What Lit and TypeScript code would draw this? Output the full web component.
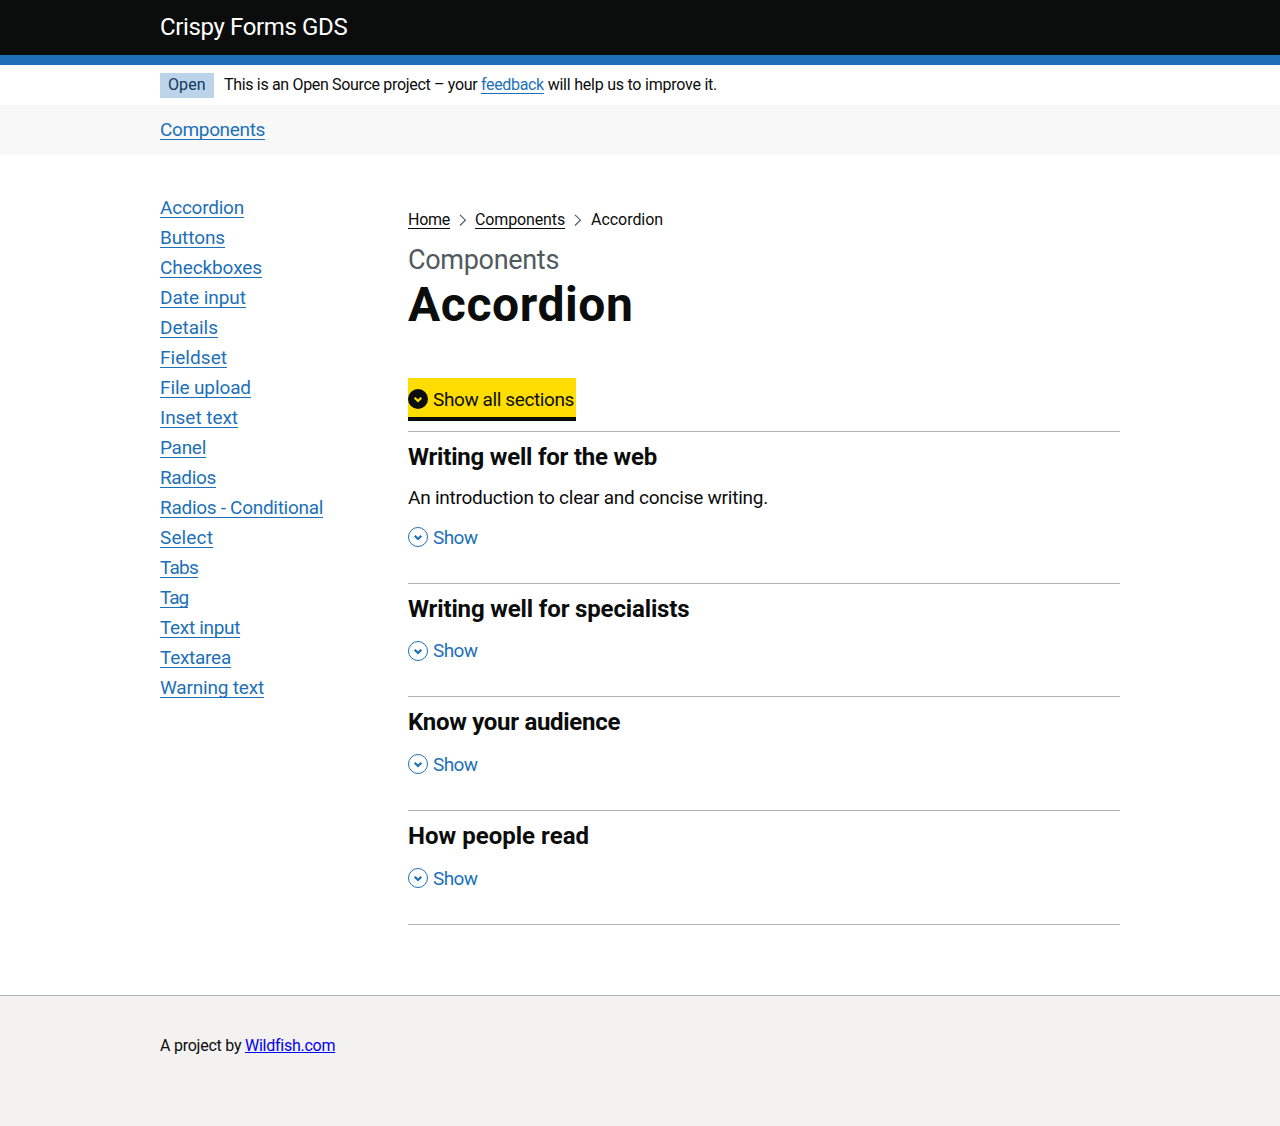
import { LitElement, html, svg, css } from "lit";
import { customElement } from "lit/decorators.js";
import { styleMap } from "lit/directives/style-map.js";

/** A label and its letter tracking in pixels. */
type Label = [text: string, tracking: number];

interface Section {
  title: Label;
  summary?: Label;
}

const NAV: Label[] = [
  ["Accordion", -0.23],
  ["Buttons", -0.1],
  ["Checkboxes", -0.09],
  ["Date input", -0.03],
  ["Details", -0.02],
  ["Fieldset", 0.05],
  ["File upload", -0.11],
  ["Inset text", -0.04],
  ["Panel", -0.28],
  ["Radios", -0.34],
  ["Radios - Conditional", -0.29],
  ["Select", 0.13],
  ["Tabs", -0.77],
  ["Tag", -1.1],
  ["Text input", -0.33],
  ["Textarea", -0.27],
  ["Warning text", -0.19],
];

const SECTIONS: Section[] = [
  {
    title: ["Writing well for the web", -0.22],
    summary: ["An introduction to clear and concise writing.", -0.24],
  },
  { title: ["Writing well for specialists", -0.15] },
  { title: ["Know your audience", -0.3] },
  { title: ["How people read", 0.02] },
];

const tracked = ([text, tracking]: Label) =>
  html`<span style=${styleMap({ letterSpacing: `${tracking}px` })}>${text}</span>`;

const link = (label: Label, cls = "link") =>
  html`<a class=${cls} href="#" style=${styleMap({ letterSpacing: `${label[1]}px` })}>${label[0]}</a>`;

const toggleIcon = (filled: boolean) => html`
  <svg class="icon" viewBox="0 0 20 20" width="20" height="20" aria-hidden="true">
    ${filled
      ? svg`<circle cx="10" cy="10" r="10" fill="#0b0c0c" />`
      : svg`<circle cx="10" cy="10" r="9.5" fill="none" stroke="#1d70b8" />`}
    <path d="M6.7 8.7 10 12l3.3-3.3" fill="none" stroke=${filled ? "#ffdd00" : "#1d70b8"} stroke-width="2.2" />
  </svg>
`;

const chevron = html`
  <svg class="chevron" viewBox="0 0 8 12" width="8" height="12" aria-hidden="true">
    <path d="M1 .9 6.4 6.2 1 11.5" fill="none" stroke="#505a5f" stroke-width="1.15" />
  </svg>
`;

@customElement("app-root")
export class AppRoot extends LitElement {
  static styles = css`
    :host {
      display: flex;
      flex-direction: column;
      min-height: 1126px;
      background: #fff;
      color: #0b0c0c;
      font: 400 19px/25px Roboto, "Liberation Sans", sans-serif;
      font-kerning: normal;
    }
    .container {
      width: 960px;
      margin: 0 auto;
    }
    .header {
      box-sizing: border-box;
      height: 65px;
      padding-top: 12px;
      border-bottom: 10px solid #1d70b8;
      background: #0b0c0c;
      color: #fff;
      font-size: 24px;
      line-height: 30px;
    }
    .phase {
      display: flex;
      align-items: flex-start;
      box-sizing: border-box;
      height: 40px;
      padding-top: 8px;
      font-size: 16px;
      line-height: 20px;
    }
    .tag {
      box-sizing: border-box;
      width: 54px;
      height: 25px;
      margin-right: 10px;
      padding: 2px 0 0 8px;
      background: #bbd4ea;
      color: #0f385c;
      font-weight: 400;
    }
    .phase-text {
      padding-top: 2px;
      white-space: pre;
    }
    .link {
      color: #1d70b8;
      text-decoration: underline 1px;
      text-underline-offset: 3px;
      text-decoration-skip-ink: none;
    }
    .link.dark {
      color: #0b0c0c;
    }
    .subnav {
      box-sizing: border-box;
      height: 50px;
      padding-top: 12px;
      background: #f8f8f8;
    }
    .body {
      display: grid;
      grid-template-columns: 248px 712px;
      padding-top: 40px;
    }
    .nav {
      display: grid;
      grid-auto-rows: 25px;
      align-content: start;
      gap: 5px;
      margin: 0;
      padding: 0;
      list-style: none;
    }
    .crumbs {
      display: flex;
      height: 20px;
      margin: 15px 0;
      font-size: 16px;
      line-height: 20px;
    }
    .chevron {
      margin: 4px 8px 0 9px;
    }
    .chevron:last-of-type {
      margin-right: 9px;
    }
    .caption {
      display: block;
      color: #505a5f;
      font-size: 27px;
      line-height: 30px;
    }
    .title {
      margin: 5px 0 48px;
      font-size: 48px;
      font-weight: 700;
      line-height: 50px;
    }
    .show-all {
      display: flex;
      gap: 5px;
      box-sizing: border-box;
      width: 168px;
      height: 43px;
      margin: 0 0 10px;
      padding: 9px 0 0;
      border: 0;
      border-bottom: 4px solid #0b0c0c;
      background: #fd0;
      color: inherit;
      font: inherit;
      white-space: nowrap;
    }
    .icon {
      flex: none;
      display: block;
      margin-top: 2.4px;
    }
    .sections {
      border-bottom: 1px solid #b1b4b6;
    }
    .section {
      box-sizing: border-box;
      height: 113.7px;
      padding-top: 10px;
      border-top: 1px solid #b1b4b6;
    }
    .section.summarised {
      height: 151.7px;
    }
    .section-title {
      margin: 0;
      font-size: 24px;
      font-weight: 700;
      line-height: 30px;
    }
    .summary {
      margin: 13px 0 0;
    }
    .toggle {
      display: flex;
      gap: 5px;
      margin: 14.7px 0 0;
      padding: 0;
      border: 0;
      background: none;
      color: #1d70b8;
      font: inherit;
    }
    .footer {
      flex: 1;
      margin-top: 70px;
      padding-top: 40px;
      border-top: 1px solid #b1b4b6;
      background: #f3f2f1;
      font-size: 16px;
      line-height: 20px;
    }
    .footer .container {
      white-space: pre;
    }
    .plain {
      color: #00e;
      text-decoration: underline 1px;
    }
  `;

  private section({ title, summary }: Section) {
    return html`
      <section class="section ${summary ? "summarised" : ""}">
        <h2 class="section-title">${tracked(title)}</h2>
        ${summary ? html`<p class="summary">${tracked(summary)}</p>` : null}
        <button class="toggle">${toggleIcon(false)}${tracked(["Show", -0.65])}</button>
      </section>
    `;
  }

  render() {
    return html`
      <header class="header"><div class="container">${tracked(["Crispy Forms GDS", -0.37])}</div></header>
      <div class="container phase">
        <strong class="tag">${tracked(["Open", 0.1])}</strong>
        <span class="phase-text"
          >${tracked(["This is an Open Source project – your ", -0.33])}${link(["feedback", -0.32])}${tracked([
            " will help us to improve it.",
            -0.23,
          ])}</span
        >
      </div>
      <nav class="subnav"><div class="container">${link(["Components", -0.35])}</div></nav>
      <div class="container body">
        <ul class="nav">
          ${NAV.map((label) => html`<li>${link(label)}</li>`)}
        </ul>
        <main>
          <nav class="crumbs">
            ${link(["Home", -0.26], "link dark")}${chevron}${link(["Components", -0.13], "link dark")}${chevron}${tracked([
              "Accordion",
              -0.05,
            ])}
          </nav>
          <span class="caption">${tracked(["Components", -0.31])}</span>
          <h1 class="title">${tracked(["Accordion", 0.58])}</h1>
          <button class="show-all">${toggleIcon(true)}${tracked(["Show all sections", -0.39])}</button>
          <div class="sections">${SECTIONS.map((s) => this.section(s))}</div>
        </main>
      </div>
      <footer class="footer">
        <div class="container">${tracked(["A project by ", -0.24])}${link(["Wildfish.com", -0.26], "plain")}</div>
      </footer>
    `;
  }
}
